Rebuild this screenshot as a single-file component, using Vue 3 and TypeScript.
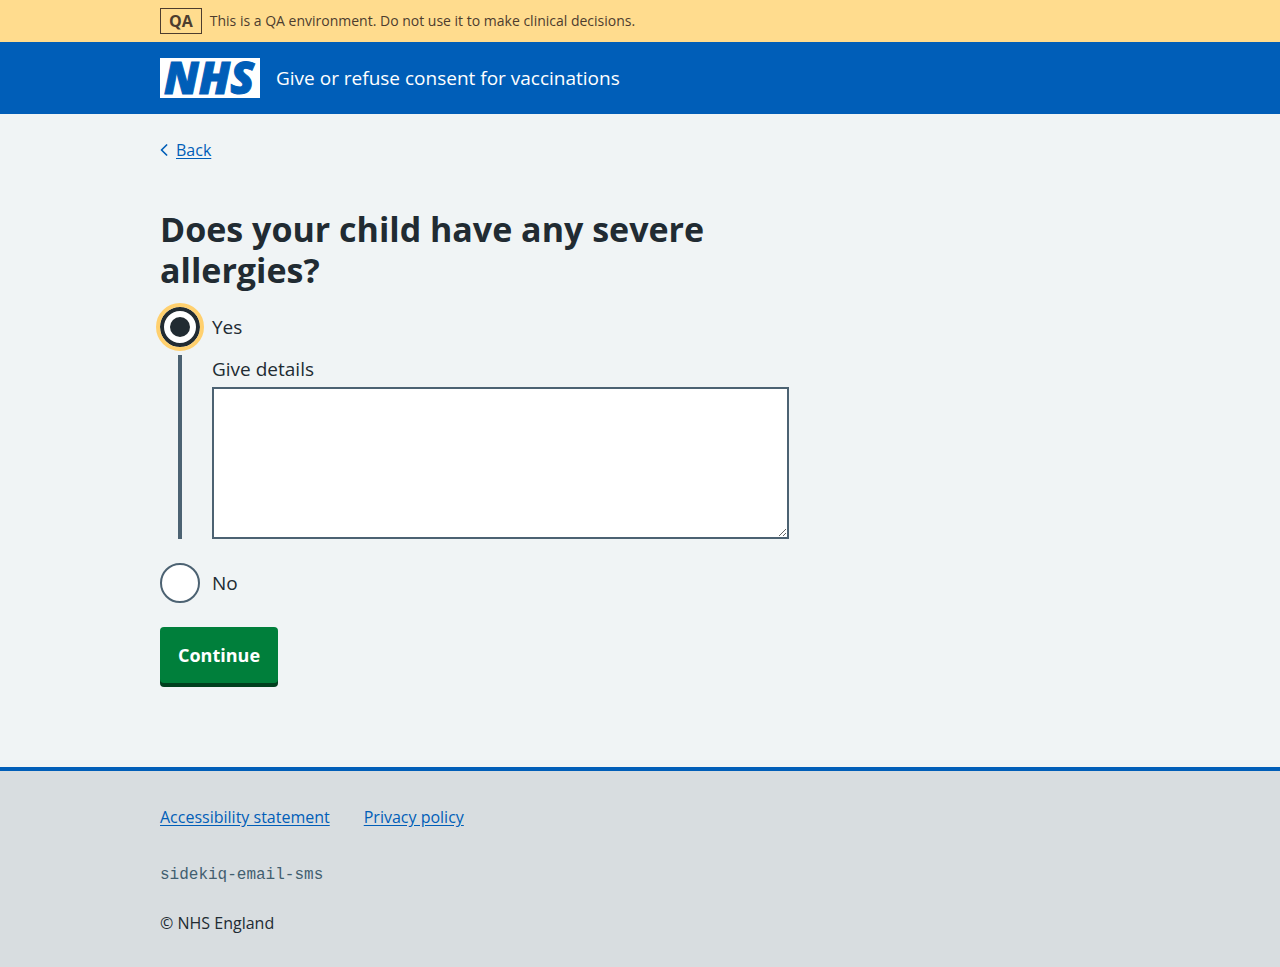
<script setup lang="ts">
import { onMounted, ref } from 'vue'

type Answer = 'yes' | 'no'

const answer = ref<Answer>('yes')
const details = ref('')
const yesInput = ref<HTMLInputElement | null>(null)

onMounted(() => yesInput.value?.focus())
</script>

<template>
  <div class="page">
    <div class="environment">
      <div class="container environment-row">
        <strong class="tag">QA</strong>
        <span>This is a QA environment. Do not use it to make clinical decisions.</span>
      </div>
    </div>

    <header class="header">
      <div class="container header-row">
        <svg class="logo" viewBox="0 0 100 40" role="img" aria-label="NHS">
          <rect width="100" height="40" fill="#fff" />
          <text class="logo-text" x="4" y="36">NHS</text>
        </svg>
        <span class="service">Give or refuse consent for vaccinations</span>
      </div>
    </header>

    <main class="container main">
      <a class="back" href="#">
        <svg class="chevron" viewBox="0 0 8 12" aria-hidden="true">
          <path d="M6.6 1 1.5 6l5.1 5" fill="none" stroke="currentColor" stroke-width="1.7" stroke-linecap="round" stroke-linejoin="round" />
        </svg>
        <span class="back-label">Back</span>
      </a>

      <form class="form" @submit.prevent>
        <fieldset class="fieldset">
          <legend class="legend"><h1 class="title">Does your child have any severe allergies?</h1></legend>
          <div class="option">
            <input id="answer-yes" ref="yesInput" v-model="answer" class="radio" type="radio" name="answer" value="yes" />
            <label for="answer-yes" class="option-label">Yes</label>
          </div>
          <div v-if="answer === 'yes'" class="conditional">
            <label for="details" class="details-label">Give details</label>
            <textarea id="details" v-model="details" class="details"></textarea>
          </div>
          <div class="option">
            <input id="answer-no" v-model="answer" class="radio" type="radio" name="answer" value="no" />
            <label for="answer-no" class="option-label">No</label>
          </div>
        </fieldset>
        <button class="button" type="submit">Continue</button>
      </form>
    </main>

    <footer class="footer">
      <div class="container footer-content">
        <nav class="links">
          <a href="#">Accessibility statement</a>
          <a href="#">Privacy policy</a>
        </nav>
        <code class="release">sidekiq-email-sms</code>
        <p class="copyright">© NHS England</p>
      </div>
    </footer>
  </div>
</template>

<style>
body {
  margin: 0;
  background: #d8dde0;
}
</style>

<style scoped>
.page {
  display: flex;
  flex-direction: column;
  min-height: 100vh;
  background: #f0f4f5;
  color: #212b32;
  font-family: "Open Sans", "Noto Sans", sans-serif;
  font-size: 16px;
  line-height: 24px;
}

.page *,
.page *::before {
  box-sizing: border-box;
}

.container {
  width: calc(100% - 64px);
  max-width: 960px;
  margin: 0 auto;
}

a {
  color: #005eb8;
  text-underline-offset: 2px;
}

.environment {
  padding: 8px 0;
  background: #ffdc8e;
  color: #4d3d2e;
}

.environment-row {
  display: flex;
  align-items: center;
  gap: 8px;
  font-size: 14px;
}

.tag {
  padding: 0 8px;
  border: 1px solid currentColor;
  font-size: 16px;
}

.header {
  padding: 16px 0;
  background: #005eb8;
  color: #fff;
}

.header-row {
  display: flex;
  align-items: center;
  gap: 16px;
}

.logo {
  flex: none;
  width: 100px;
  height: 40px;
  overflow: visible;
}

.logo-text {
  fill: #005eb8;
  stroke: #005eb8;
  stroke-width: 1px;
  font-family: "Open Sans", sans-serif;
  font-size: 44px;
  font-style: italic;
  font-weight: 800;
}

.service {
  font-size: 19px;
  line-height: 28px;
}

.main {
  padding: 24px 0 80px;
}

.back {
  display: inline-flex;
  align-items: center;
  gap: 8px;
  text-decoration: none;
}

.back-label {
  text-decoration: underline;
}

.chevron {
  width: 8px;
  height: 12px;
}

.form {
  max-width: 629px;
  margin-top: 47px;
}

.fieldset {
  min-width: 0;
  margin: 0 0 24px;
  padding: 0;
  border: 0;
}

.legend {
  padding: 0;
  margin-bottom: 16px;
}

.title {
  margin: 0;
  font-size: 34px;
  font-weight: 700;
  line-height: 41px;
}

.option {
  display: flex;
  align-items: center;
  gap: 12px;
}

.option-label,
.details-label {
  font-size: 19px;
  line-height: 28px;
}

.radio {
  flex: none;
  display: grid;
  place-items: center;
  width: 40px;
  height: 40px;
  margin: 0;
  border: 2px solid #4c6272;
  border-radius: 50%;
  background: #fff;
  appearance: none;
}

.radio:checked::before {
  content: "";
  width: 20px;
  height: 20px;
  border-radius: 50%;
  background: #212b32;
}

.radio:focus {
  border: 4px solid #212b32;
  outline: 4px solid #ffd06e;
  outline-offset: 0;
}

.conditional {
  display: flex;
  flex-direction: column;
  gap: 4px;
  margin: 8px 0 24px 18px;
  padding-left: 30px;
  border-left: 4px solid #4c6272;
}

.details {
  display: block;
  width: 100%;
  height: 152px;
  padding: 4px;
  border: 2px solid #4c6272;
  border-radius: 0;
  background: #fff;
  color: inherit;
  font: inherit;
  resize: vertical;
}

.button {
  display: block;
  margin: 0 0 4px;
  padding: 14px 18px;
  border: 0;
  border-radius: 4px;
  background: #007f3b;
  box-shadow: 0 4px 0 #00401e;
  color: #fff;
  font-family: inherit;
  font-size: 18px;
  font-weight: 700;
  line-height: 28px;
}

.footer {
  flex: 1;
  border-top: 4px solid #005eb8;
  background: #d8dde0;
}

.footer-content {
  padding: 34px 0 32px;
}

.links {
  display: flex;
  flex-wrap: wrap;
  gap: 8px 34px;
}

.release {
  display: block;
  margin: 34px 0 24px;
  color: #425f70;
  font-family: "Liberation Mono", monospace;
  font-size: 16px;
}

.copyright {
  margin: 0;
}
</style>
